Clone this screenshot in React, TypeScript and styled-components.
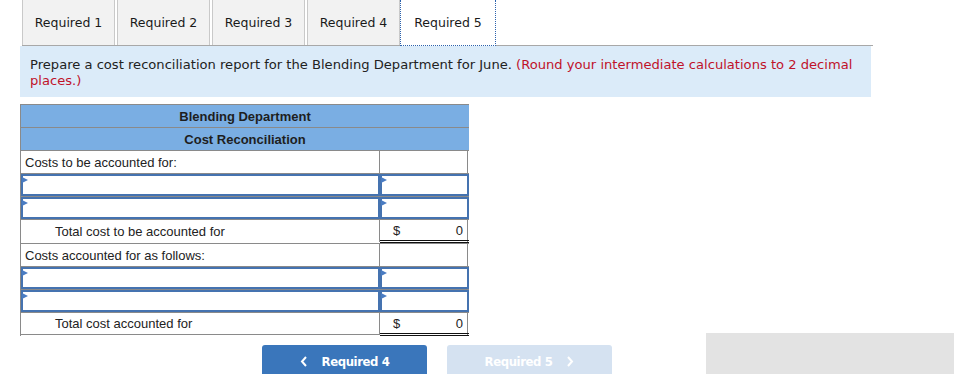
import React from 'react';
import styled, { createGlobalStyle } from 'styled-components';

const GlobalStyle = createGlobalStyle`
    html, body {
        margin: 0;
        padding: 0;
        background: #ffffff;
    }
    body {
        width: 954px;
        height: 374px;
        overflow: hidden;
    }
`;

const Page = styled.div`
    width: 954px;
    height: 374px;
    font-family: "DejaVu Sans", Verdana, sans-serif;
`;

const TabBar = styled.div`
    display: flex;
    gap: 2px;
    height: 45px;
    margin-left: 22px;
    width: 851px;
    border-bottom: 1px solid #a8a8a8;
    box-sizing: content-box;
`;

const Tab = styled.div<{ active?: boolean }>`
    width: ${p => (p.active ? '96px' : '93px')};
    height: ${p => (p.active ? '46px' : '45px')};
    box-sizing: border-box;
    display: flex;
    align-items: center;
    justify-content: center;
    font-size: 12.5px;
    color: #1a1a1a;
    background: ${p => (p.active ? '#ffffff' : '#f2f2f2')};
    border: ${p => (p.active ? '1px dotted #2c62ad' : '1px solid #c9c9c9')};
    border-top: none;
    border-bottom: ${p => (p.active ? '1px dotted #2c62ad' : 'none')};
    margin-left: ${p => (p.active ? '-2px' : '0')};
    position: relative;
    z-index: ${p => (p.active ? 1 : 0)};
`;

const Instructions = styled.div`
    margin-left: 20px;
    width: 851px;
    height: 51px;
    background: #dbebf9;
    box-sizing: border-box;
    padding: 11px 10px 0 10px;
    font-size: 13.1px;
    line-height: 16px;
    color: #222;
`;

const Red = styled.span`
    color: #c0122a;
`;

const Table = styled.div`
    margin: 7px 0 0 20px;
    width: 448px;
    display: grid;
    grid-template-columns: 359px 89px;
    border-left: 1px solid #8a8a8a;
    border-right: 1px solid #8a8a8a;
    box-sizing: border-box;
    font-family: "Liberation Sans", Arial, sans-serif;
    font-size: 13px;
    color: #222;
`;

const Header = styled.div`
    grid-column: 1 / span 2;
    height: 23px;
    box-sizing: border-box;
    background: #7aaee3;
    border-top: 1px solid #8a8a8a;
    display: flex;
    align-items: center;
    justify-content: center;
    font-weight: bold;
    color: #1e1e1e;
`;

const Label = styled.div<{ indent?: boolean; last?: boolean }>`
    height: 23px;
    box-sizing: border-box;
    border-top: 1px solid #8a8a8a;
    border-right: 1px solid #8a8a8a;
    border-bottom: ${p => (p.last ? '1px solid #8a8a8a' : 'none')};
    display: flex;
    align-items: center;
    padding-left: ${p => (p.indent ? '34px' : '4px')};
`;

const Cell = styled.div`
    height: 23px;
    box-sizing: border-box;
    border-top: 1px solid #8a8a8a;
`;

const AmountCell = styled.div`
    height: 24px;
    box-sizing: border-box;
    border-top: 1px solid #8a8a8a;
    border-bottom: 3px double #111;
    display: flex;
    align-items: center;
    justify-content: space-between;
    padding: 0 6px 0 13px;
`;

const InputWrap = styled.div`
    height: 23px;
    box-sizing: border-box;
    background: #8a8a8a;
`;

const InputBox = styled.div`
    position: relative;
    height: 22px;
    margin-top: 1px;
    box-sizing: border-box;
    border: 2px solid #4573b0;
    background: #fff;

    &::before {
        content: '';
        position: absolute;
        left: -1px;
        top: 1px;
        border-top: 3px solid transparent;
        border-bottom: 3px solid transparent;
        border-left: 6px solid #4a7cc2;
    }
`;

const Footer = styled.div`
    display: flex;
    align-items: flex-start;
    margin-top: -3px;
    height: 41px;
`;

const Nav = styled.div`
    display: flex;
    gap: 20px;
    margin: 12px 0 0 262px;
`;

const NavButton = styled.div<{ disabled?: boolean }>`
    width: 165px;
    height: 32px;
    border-radius: 3px 3px 0 0;
    background: ${p => (p.disabled ? '#d5e2f1' : '#3a76bb')};
    color: #ffffff;
    display: flex;
    align-items: center;
    justify-content: center;
    gap: 14px;
    font-family: "Liberation Sans Narrow", "DejaVu Sans Condensed", "Roboto", sans-serif;
    font-weight: bold;
    font-size: 13px;
    letter-spacing: -0.4px;
    box-sizing: border-box;
`;

const Chevron = styled.svg`
    width: 8px;
    height: 11px;
`;

const GrayBox = styled.div`
    margin-left: auto;
    width: 248px;
    height: 41px;
    background: #e3e3e3;
`;

function Left() {
    return (
        <Chevron viewBox="0 0 8 11">
            <path d="M6 1 L2 5.5 L6 10" fill="none" stroke="#fff" strokeWidth="2" />
        </Chevron>
    );
}

function Right() {
    return (
        <Chevron viewBox="0 0 8 11">
            <path d="M2 1 L6 5.5 L2 10" fill="none" stroke="#fff" strokeWidth="2" />
        </Chevron>
    );
}

function InputRow() {
    return (
        <>
            <InputWrap><InputBox /></InputWrap>
            <InputWrap><InputBox /></InputWrap>
        </>
    );
}

export default function App() {
    const tabs = ['Required 1', 'Required 2', 'Required 3', 'Required 4', 'Required 5'];
    return (
        <Page>
            <GlobalStyle />
            <TabBar>
                {tabs.map((t, i) => (
                    <Tab key={t} active={i === 4}>{t}</Tab>
                ))}
            </TabBar>
            <Instructions>
                Prepare a cost reconciliation report for the Blending Department for June.{' '}
                <Red>(Round your intermediate calculations to 2 decimal places.)</Red>
            </Instructions>
            <Table>
                <Header>Blending Department</Header>
                <Header>Cost Reconciliation</Header>
                <Label>Costs to be accounted for:</Label>
                <Cell />
                <InputRow />
                <InputRow />
                <Label indent>Total cost to be accounted for</Label>
                <AmountCell><span>$</span><span>0</span></AmountCell>
                <Label>Costs accounted for as follows:</Label>
                <Cell />
                <InputRow />
                <InputRow />
                <Label indent last>Total cost accounted for</Label>
                <AmountCell><span>$</span><span>0</span></AmountCell>
            </Table>
            <Footer>
                <Nav>
                    <NavButton><Left /> Required 4</NavButton>
                    <NavButton disabled>Required 5 <Right /></NavButton>
                </Nav>
                <GrayBox />
            </Footer>
        </Page>
    );
}
